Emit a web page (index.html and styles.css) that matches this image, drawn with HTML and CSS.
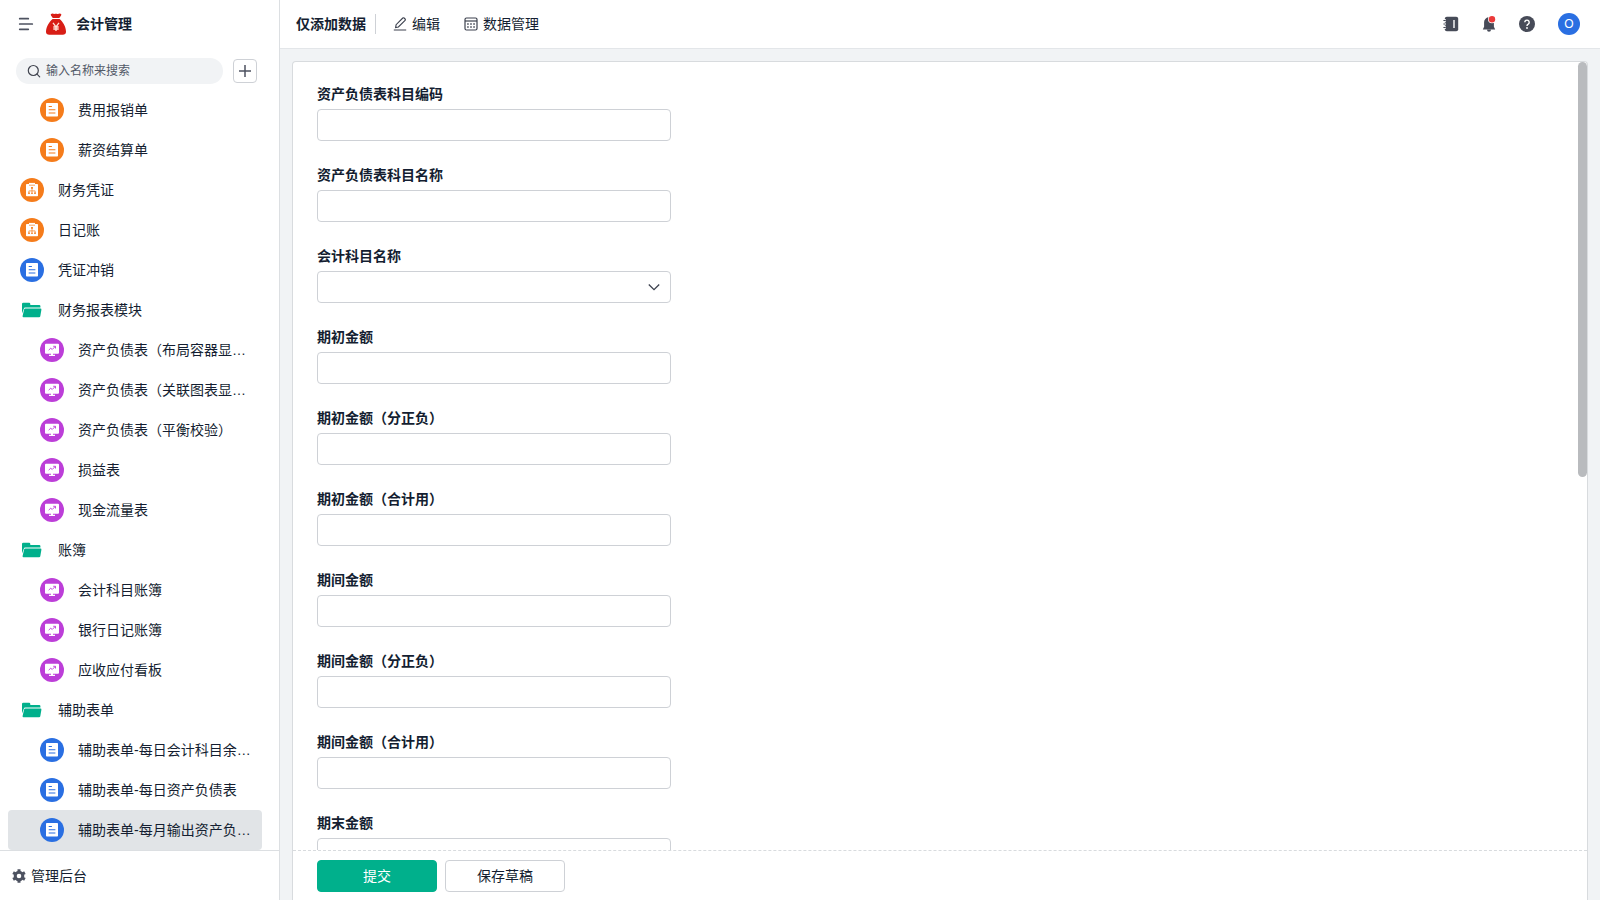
FILE: index.html
```html
<!DOCTYPE html>
<html lang="zh-CN">
<head>
    <meta charset="UTF-8">
    <meta name="viewport" content="width=device-width, initial-scale=1.0">
    <title>会计管理</title>
    <link rel="stylesheet" href="styles.css">
</head>
<body>
    <!-- 图标 -->
    <svg class="sprite" aria-hidden="true">
        <symbol id="icon-form" viewBox="0 0 24 24">
            <circle cx="12" cy="12" r="12" fill="currentColor"/>
            <rect x="6" y="5" width="12" height="13.500" rx=".8" fill="#fff"/>
            <path d="M8.700 8.500h3.200M8.700 11.800h6.700M8.700 15h6.700" stroke="currentColor" stroke-width="1.100"/>
        </symbol>
        <symbol id="icon-flow" viewBox="0 0 24 24">
            <circle cx="12" cy="12" r="12" fill="currentColor"/>
            <rect x="6" y="6" width="12" height="12.300" rx=".8" fill="#fff"/>
            <path d="M9 4.900h6v2H9z" fill="#fff"/>
            <path d="M9 7.200h6" stroke="currentColor" stroke-width=".7"/>
            <path d="M12 10v4.500M8.900 15v-2.100h6.200V15" fill="none" stroke="currentColor" stroke-width=".7"/>
            <path d="M11.100 9h1.800v1.800h-1.800zM8.200 14.400h1.600v1.700H8.200zM11.200 14.400h1.600v1.700h-1.600zM14.200 14.400h1.600v1.700h-1.600z" fill="currentColor"/>
        </symbol>
        <symbol id="icon-board" viewBox="0 0 24 24">
            <circle cx="12" cy="12" r="12" fill="currentColor"/>
            <path d="M6 5.800h12a1 1 0 0 1 1 1v7.900a1 1 0 0 1-1 1H6a1 1 0 0 1-1-1V6.800a1 1 0 0 1 1-1zM11 15.500h2v1.300h2V18H9v-1.200h2z" fill="#fff"/>
            <path d="M8.700 12.300l2-2.200 1.500 1.400 2.900-2.900M13.200 8.300h2.300v2.200" fill="none" stroke="currentColor" stroke-width=".9"/>
        </symbol>
        <symbol id="icon-folder" viewBox="0 0 24 24">
            <path d="M2 15.500V6a1.200 1.200 0 0 1 1.200-1.200h5.900a1.200 1.200 0 0 1 1.200 1.200v.9h8.900a1.200 1.200 0 0 1 1.200 1.200v1.500H5.200a1.400 1.400 0 0 0-1.400 1.200z" fill="currentColor"/>
            <path d="M5.400 10.500h15a1 1 0 0 1 1 1.200l-1.100 6.500a1.300 1.300 0 0 1-1.300 1.100H3.600a1 1 0 0 1-1-1.200l1.500-6.500a1.300 1.300 0 0 1 1.300-1.100z" fill="currentColor"/>
        </symbol>
    </svg>

    <div class="app">
        <aside class="sidebar">
            <div class="sidebar-head">
                <button class="icon-button" type="button" aria-label="菜单">
                    <svg width="16" height="16" viewBox="0 0 16 16" fill="none" stroke="#4d5260" stroke-width="1.700" stroke-linecap="round">
                        <path d="M1.700 2.700h8.600M1.700 8h12.600M1.700 13.300h8.600"/>
                    </svg>
                </button>
                <svg class="logo" width="20" height="22" viewBox="0 0 20 22">
                    <path d="M4.800 1.200C6.500-.2 7.500 1 8.300.9 9.300.8 10.300.8 11.500.9 13 1 13.800-.1 15.300 1.200 15.500 2.500 14 3.800 13.300 5H6.800C6.200 3.800 4.500 2.500 4.800 1.200z" fill="#d81e16"/>
                    <path d="M6.600 6h7c3 2.200 6.300 7.800 6.400 12.500.1 2.100-1.200 3.200-3.200 3.200H3.200c-2 0-3.300-1.100-3.200-3.200C.2 13.800 3.600 8.200 6.600 6z" fill="#d81e16"/>
                    <path d="M7 9.800l3 4 3-4M10 13.800V18M7.300 14h5.400M7.300 16h5.400" fill="none" stroke="#ffe3d8" stroke-width="1.300"/>
                </svg>
                <h1 class="app-name">会计管理</h1>
            </div>

            <div class="search-row">
                <label class="search">
                    <svg width="14" height="14" viewBox="0 0 14 14" fill="none" stroke="#40444f" stroke-width="1.200" stroke-linecap="round">
                        <circle cx="6.300" cy="6.500" r="5"/>
                        <path d="M10 10.200l2.700 2.700"/>
                    </svg>
                    <input class="search-input" type="text" placeholder="输入名称来搜索" aria-label="搜索">
                </label>
                <button class="add-button" type="button" aria-label="添加">
                    <svg width="12" height="12" viewBox="0 0 12 12" stroke="#4d5260" stroke-width="1.500">
                        <path d="M6 0v12M0 6h12"/>
                    </svg>
                </button>
            </div>

            <nav class="menu">
                <a class="menu-item sub" href="#"><svg class="menu-icon orange"><use href="#icon-form"/></svg><span class="menu-text">费用报销单</span></a>
                <a class="menu-item sub" href="#"><svg class="menu-icon orange"><use href="#icon-form"/></svg><span class="menu-text">薪资结算单</span></a>
                <a class="menu-item" href="#"><svg class="menu-icon orange"><use href="#icon-flow"/></svg><span class="menu-text">财务凭证</span></a>
                <a class="menu-item" href="#"><svg class="menu-icon orange"><use href="#icon-flow"/></svg><span class="menu-text">日记账</span></a>
                <a class="menu-item" href="#"><svg class="menu-icon blue"><use href="#icon-form"/></svg><span class="menu-text">凭证冲销</span></a>
                <a class="menu-item" href="#"><svg class="menu-icon green"><use href="#icon-folder"/></svg><span class="menu-text">财务报表模块</span></a>
                <a class="menu-item sub" href="#"><svg class="menu-icon purple"><use href="#icon-board"/></svg><span class="menu-text">资产负债表（布局容器显…</span></a>
                <a class="menu-item sub" href="#"><svg class="menu-icon purple"><use href="#icon-board"/></svg><span class="menu-text">资产负债表（关联图表显…</span></a>
                <a class="menu-item sub" href="#"><svg class="menu-icon purple"><use href="#icon-board"/></svg><span class="menu-text">资产负债表（平衡校验）</span></a>
                <a class="menu-item sub" href="#"><svg class="menu-icon purple"><use href="#icon-board"/></svg><span class="menu-text">损益表</span></a>
                <a class="menu-item sub" href="#"><svg class="menu-icon purple"><use href="#icon-board"/></svg><span class="menu-text">现金流量表</span></a>
                <a class="menu-item" href="#"><svg class="menu-icon green"><use href="#icon-folder"/></svg><span class="menu-text">账簿</span></a>
                <a class="menu-item sub" href="#"><svg class="menu-icon purple"><use href="#icon-board"/></svg><span class="menu-text">会计科目账簿</span></a>
                <a class="menu-item sub" href="#"><svg class="menu-icon purple"><use href="#icon-board"/></svg><span class="menu-text">银行日记账簿</span></a>
                <a class="menu-item sub" href="#"><svg class="menu-icon purple"><use href="#icon-board"/></svg><span class="menu-text">应收应付看板</span></a>
                <a class="menu-item" href="#"><svg class="menu-icon green"><use href="#icon-folder"/></svg><span class="menu-text">辅助表单</span></a>
                <a class="menu-item sub" href="#"><svg class="menu-icon blue"><use href="#icon-form"/></svg><span class="menu-text">辅助表单-每日会计科目余…</span></a>
                <a class="menu-item sub" href="#"><svg class="menu-icon blue"><use href="#icon-form"/></svg><span class="menu-text">辅助表单-每日资产负债表</span></a>
                <a class="menu-item sub active" href="#"><svg class="menu-icon blue"><use href="#icon-form"/></svg><span class="menu-text">辅助表单-每月输出资产负…</span></a>
            </nav>

            <a class="sidebar-foot" href="#">
                <svg width="14" height="14" viewBox="0 0 14 14">
                    <circle cx="7" cy="7" r="3.800" fill="none" stroke="#4d5260" stroke-width="3"/>
                    <path d="M7 .2v2.300M7 11.500v2.300M1.100 3.600l2 1.150M10.900 9.250l2 1.150M1.100 10.400l2-1.150M10.900 4.750l2-1.150" stroke="#4d5260" stroke-width="3"/>
                </svg>
                <span>管理后台</span>
            </a>
        </aside>

        <div class="main">
            <header class="topbar">
                <h2 class="view-name">仅添加数据</h2>
                <button class="tool edit" type="button">
                    <svg width="14" height="14" viewBox="0 0 14 14" fill="none" stroke="#3c414e" stroke-width="1.100">
                        <path d="M.8 13h12.400M2.600 10.600l.5-2.900L9.800 1a.9.900 0 0 1 1.300 0l1 1a.9.900 0 0 1 0 1.300L5.400 10z"/>
                    </svg>
                    编辑
                </button>
                <button class="tool" type="button">
                    <svg width="14" height="14" viewBox="0 0 14 14" fill="none" stroke="#3c414e" stroke-width="1.200">
                        <rect x="1" y="1" width="12" height="12" rx="1.500"/>
                        <path d="M1 4h12"/>
                        <path d="M3.200 7h7.600M3.200 10h7.600" stroke-width="1.500" stroke-dasharray="1.500 1.550"/>
                    </svg>
                    数据管理
                </button>

                <div class="topbar-right">
                    <div class="topbar-icons">
                        <button class="icon-button" type="button" aria-label="通讯录">
                            <svg width="16" height="16" viewBox="0 0 16 16">
                                <rect x="1.800" y=".8" width="13.400" height="14.400" rx="2" fill="#474b58"/>
                                <path d="M1 4.500h2M1 8h2M1 11.500h2" stroke="#fff" stroke-width="2.400"/>
                                <path d="M.4 4.500h2.400M.4 8h2.400M.4 11.500h2.400" stroke="#474b58" stroke-width="1.200"/>
                                <path d="M11 4v8" stroke="#fff" stroke-width="1.400"/>
                            </svg>
                        </button>
                        <button class="icon-button" type="button" aria-label="消息">
                            <svg width="16" height="16" viewBox="0 0 16 16">
                                <path d="M8 1.200a4.900 4.900 0 0 1 4.900 4.900v4.700l1.300 2.600H1.800l1.300-2.600V6.100A4.900 4.900 0 0 1 8 1.200zM6 13.800h4a2 2 0 0 1-4 0z" fill="#474b58"/>
                                <circle cx="11" cy="3.200" r="4" fill="#fff"/>
                                <circle cx="11" cy="3.200" r="3.200" fill="#eb3a3a"/>
                            </svg>
                        </button>
                        <button class="icon-button" type="button" aria-label="帮助">
                            <svg width="16" height="16" viewBox="0 0 16 16">
                                <circle cx="8" cy="8" r="8" fill="#474b58"/>
                                <path d="M5.800 6.300a2.200 2.200 0 1 1 3.400 1.850C8.300 8.700 8 9 8 10" fill="none" stroke="#fff" stroke-width="1.400"/>
                                <circle cx="8" cy="12" r=".9" fill="#fff"/>
                            </svg>
                        </button>
                    </div>
                    <button class="avatar" type="button">O</button>
                </div>
            </header>

            <form class="card">
                <div class="fields">
                    <div class="field">
                        <label for="f1">资产负债表科目编码</label>
                        <input id="f1" type="text">
                    </div>
                    <div class="field">
                        <label for="f2">资产负债表科目名称</label>
                        <input id="f2" type="text">
                    </div>
                    <div class="field">
                        <label for="f3">会计科目名称</label>
                        <div class="select-box">
                            <select id="f3"><option></option></select>
                            <svg class="arrow" width="12" height="12" viewBox="0 0 12 12" fill="none" stroke="#3c414e" stroke-width="1.300">
                                <path d="M.8 3.500L6 8.700l5.200-5.200"/>
                            </svg>
                        </div>
                    </div>
                    <div class="field">
                        <label for="f4">期初金额</label>
                        <input id="f4" type="text">
                    </div>
                    <div class="field">
                        <label for="f5">期初金额（分正负）</label>
                        <input id="f5" type="text">
                    </div>
                    <div class="field">
                        <label for="f6">期初金额（合计用）</label>
                        <input id="f6" type="text">
                    </div>
                    <div class="field">
                        <label for="f7">期间金额</label>
                        <input id="f7" type="text">
                    </div>
                    <div class="field">
                        <label for="f8">期间金额（分正负）</label>
                        <input id="f8" type="text">
                    </div>
                    <div class="field">
                        <label for="f9">期间金额（合计用）</label>
                        <input id="f9" type="text">
                    </div>
                    <div class="field">
                        <label for="f10">期末金额</label>
                        <input id="f10" type="text">
                    </div>
                </div>
                <div class="scroll-thumb"></div>
                <div class="actions">
                    <button class="btn primary" type="submit">提交</button>
                    <button class="btn" type="button">保存草稿</button>
                </div>
            </form>
        </div>
    </div>
</body>
</html>
```

FILE: styles.css
```css
* {
    box-sizing: border-box;
}

body {
    margin: 0;
    font-family: "Liberation Sans", "Noto Sans CJK SC", sans-serif;
    font-size: 14px;
    line-height: 20px;
    color: #141e31;
    background-color: #f1f3f5;
}

button, input, select {
    font-family: inherit;
    font-size: 14px;
    color: inherit;
}

button {
    padding: 0;
    border: none;
    background: none;
    line-height: 20px;
    cursor: pointer;
}

a {
    color: inherit;
    text-decoration: none;
}

h1, h2 {
    margin: 0;
    font-size: 14px;
    font-weight: 700;
}

svg {
    flex: none;
    display: block;
}

.sprite {
    position: absolute;
    width: 0;
    height: 0;
}

.app {
    display: flex;
    height: 100vh;
    overflow: hidden;
}

/* 左侧栏 */
.sidebar {
    flex: none;
    display: flex;
    flex-direction: column;
    width: 280px;
    background-color: #fff;
    border-right: 1px solid #dcdfe2;
}

.sidebar-head {
    display: flex;
    align-items: center;
    height: 48px;
    padding-left: 18px;
}

.logo {
    margin: 0 10px 0 12px;
}

.search-row {
    display: flex;
    align-items: center;
    gap: 10px;
    padding: 10px 22px 6px 16px;
}

.search {
    flex: 1;
    display: flex;
    align-items: center;
    gap: 5px;
    height: 26px;
    padding: 0 11px;
    border-radius: 13px;
    background-color: #f1f3f5;
}

.search-input {
    flex: 1;
    min-width: 0;
    padding: 0;
    border: none;
    outline: none;
    background: none;
    font-size: 12px;
}

.search-input::placeholder {
    color: #525967;
}

.add-button {
    display: flex;
    align-items: center;
    justify-content: center;
    width: 24px;
    height: 24px;
    border: 1px solid #ced1d6;
    border-radius: 4px;
}

.menu {
    flex: 1;
    min-height: 0;
    padding: 0 17px 0 8px;
    overflow-y: auto;
    scrollbar-width: none;
}

.menu-item {
    display: flex;
    align-items: center;
    gap: 14px;
    height: 40px;
    padding: 0 8px 0 12px;
    border-radius: 4px;
}

.menu-item.sub {
    padding-left: 32px;
}

.menu-item.active {
    background-color: #e1e4e7;
}

.menu-icon {
    width: 24px;
    height: 24px;
}

.menu-text {
    white-space: nowrap;
}

.orange { color: #f57c1b; }
.blue { color: #2a6fe2; }
.green { color: #00b08c; }
.purple { color: #bc3ed8; }

.sidebar-foot {
    display: flex;
    align-items: center;
    gap: 5px;
    height: 50px;
    padding-left: 12px;
    border-top: 1px solid #dcdfe2;
}

/* 右侧主体 */
.main {
    flex: 1;
    min-width: 0;
    display: flex;
    flex-direction: column;
}

.topbar {
    flex: none;
    display: flex;
    align-items: center;
    height: 49px;
    padding: 0 20px 0 16px;
    background-color: #fff;
    border-bottom: 1px solid #e3e6e9;
}

.view-name {
    padding-right: 9px;
    border-right: 1px solid #ced1d6;
}

.tool {
    display: flex;
    align-items: center;
    gap: 5px;
    margin-left: 24px;
}

.tool.edit {
    margin-left: 17px;
}

.topbar-right {
    display: flex;
    align-items: center;
    gap: 23px;
    margin-left: auto;
}

.topbar-icons {
    display: flex;
    gap: 22px;
}

.avatar {
    width: 22px;
    height: 22px;
    border-radius: 50%;
    background-color: #2a6fe2;
    color: #fff;
    font-size: 12px;
}

.card {
    position: relative;
    flex: 1;
    min-height: 0;
    display: flex;
    flex-direction: column;
    margin: 12px 12px 0;
    background-color: #fff;
    border: 1px solid #d8dbde;
    border-bottom: none;
    border-radius: 4px 4px 0 0;
}

.fields {
    flex: 1;
    min-height: 0;
    padding: 22px 24px 0;
    overflow-y: auto;
    scrollbar-width: none;
}

.field {
    max-width: 354px;
    margin-bottom: 24px;
}

.field label {
    display: block;
    margin-bottom: 5px;
    font-weight: 700;
}

.field input,
.field select {
    display: block;
    width: 100%;
    height: 32px;
    padding: 0 10px;
    border: 1px solid #ced1d6;
    border-radius: 4px;
    background-color: #fff;
    outline: none;
}

.field select {
    appearance: none;
}

.select-box {
    position: relative;
}

.arrow {
    position: absolute;
    top: 10px;
    right: 11px;
    pointer-events: none;
}

.scroll-thumb {
    position: absolute;
    top: 0;
    right: 0;
    width: 9px;
    height: 415px;
    border-radius: 5px;
    background-color: #b9bbbe;
}

.actions {
    flex: none;
    display: flex;
    gap: 8px;
    padding: 9px 24px 8px;
    border-top: 1px dashed #d8dbde;
}

.btn {
    width: 120px;
    height: 32px;
    border: 1px solid #ced1d6;
    border-radius: 4px;
    background-color: #fff;
}

.btn.primary {
    border-color: #00b08c;
    background-color: #00b08c;
    color: #fff;
}
```
